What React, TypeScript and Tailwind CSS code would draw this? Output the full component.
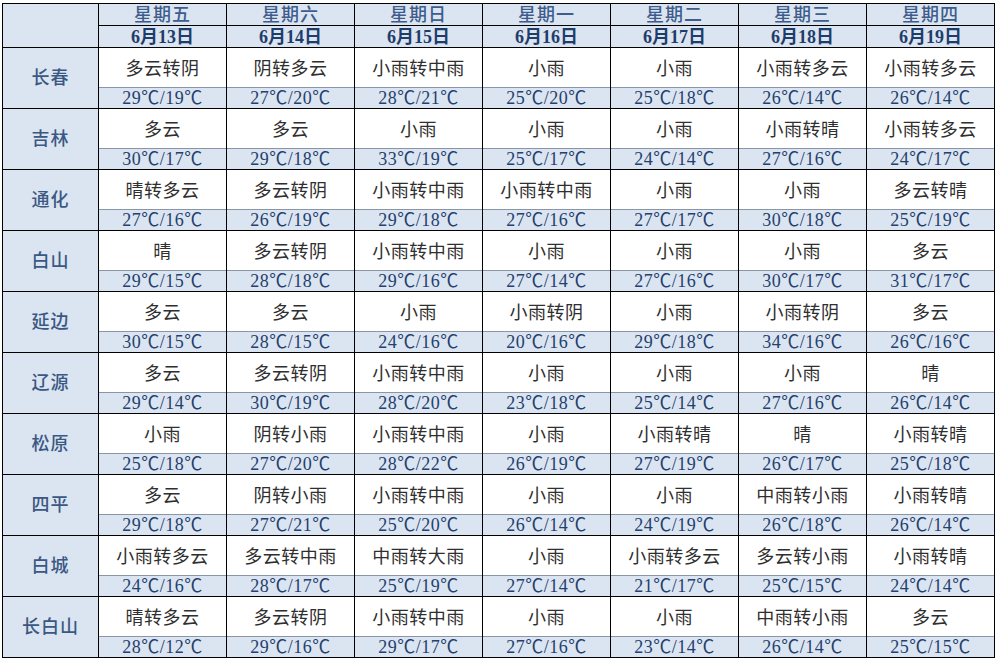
import React from "react";

const days = [
  { week: "星期五", date: "6月13日" },
  { week: "星期六", date: "6月14日" },
  { week: "星期日", date: "6月15日" },
  { week: "星期一", date: "6月16日" },
  { week: "星期二", date: "6月17日" },
  { week: "星期三", date: "6月18日" },
  { week: "星期四", date: "6月19日" },
];

// [weather, high, low]
const rows: { city: string; days: [string, number, number][] }[] = [
  { city: "长春", days: [["多云转阴", 29, 19], ["阴转多云", 27, 20], ["小雨转中雨", 28, 21], ["小雨", 25, 20], ["小雨", 25, 18], ["小雨转多云", 26, 14], ["小雨转多云", 26, 14]] },
  { city: "吉林", days: [["多云", 30, 17], ["多云", 29, 18], ["小雨", 33, 19], ["小雨", 25, 17], ["小雨", 24, 14], ["小雨转晴", 27, 16], ["小雨转多云", 24, 17]] },
  { city: "通化", days: [["晴转多云", 27, 16], ["多云转阴", 26, 19], ["小雨转中雨", 29, 18], ["小雨转中雨", 27, 16], ["小雨", 27, 17], ["小雨", 30, 18], ["多云转晴", 25, 19]] },
  { city: "白山", days: [["晴", 29, 15], ["多云转阴", 28, 18], ["小雨转中雨", 29, 16], ["小雨", 27, 14], ["小雨", 27, 16], ["小雨", 30, 17], ["多云", 31, 17]] },
  { city: "延边", days: [["多云", 30, 15], ["多云", 28, 15], ["小雨", 24, 16], ["小雨转阴", 20, 16], ["小雨", 29, 18], ["小雨转阴", 34, 16], ["多云", 26, 16]] },
  { city: "辽源", days: [["多云", 29, 14], ["多云转阴", 30, 19], ["小雨转中雨", 28, 20], ["小雨", 23, 18], ["小雨", 25, 14], ["小雨", 27, 16], ["晴", 26, 14]] },
  { city: "松原", days: [["小雨", 25, 18], ["阴转小雨", 27, 20], ["小雨转中雨", 28, 22], ["小雨", 26, 19], ["小雨转晴", 27, 19], ["晴", 26, 17], ["小雨转晴", 25, 18]] },
  { city: "四平", days: [["多云", 29, 18], ["阴转小雨", 27, 21], ["小雨转中雨", 25, 20], ["小雨", 26, 14], ["小雨", 24, 19], ["中雨转小雨", 26, 18], ["小雨转晴", 26, 14]] },
  { city: "白城", days: [["小雨转多云", 24, 16], ["多云转中雨", 28, 17], ["中雨转大雨", 25, 19], ["小雨", 27, 14], ["小雨转多云", 21, 17], ["多云转小雨", 25, 15], ["小雨转晴", 24, 14]] },
  { city: "长白山", days: [["晴转多云", 28, 12], ["多云转阴", 29, 16], ["小雨转中雨", 29, 17], ["小雨", 27, 16], ["小雨", 23, 14], ["中雨转小雨", 26, 14], ["多云", 25, 15]] },
];

const font = { fontFamily: '"Liberation Serif", "Noto Sans CJK SC", serif' };

const HeaderRow = () => (
  <div className="flex gap-px">
    <div className="w-[95px] h-[43px] bg-[#dbe5f1]" />
    {days.map((d) => (
      <div key={d.date} className="w-[127px] flex flex-col gap-px">
        <div className="h-[21px] bg-[#dbe5f1] flex items-center justify-center text-[18px] leading-none font-medium text-[#3e5d8c] tracking-[1px]">
          {d.week}
        </div>
        <div className="h-[21px] bg-[#dbe5f1] flex items-center justify-center text-[18px] leading-none font-bold text-[#1f3d6b]">
          {d.date}
        </div>
      </div>
    ))}
  </div>
);

const CityRow = ({ row }: { row: (typeof rows)[number] }) => (
  <div className="flex gap-px h-[60px]">
    <div className="w-[95px] bg-[#dbe5f1] flex items-center justify-center text-[18px] font-medium text-[#3a5883] tracking-[1px]">
      {row.city}
    </div>
    {row.days.map(([w, hi, lo], i) => (
      <div key={i} className="w-[127px] flex flex-col">
        <div className="h-[39px] pt-[3px] bg-white flex items-center justify-center text-[18px] leading-none text-[#2f2f2f] tracking-[0.5px]">
          {w}
        </div>
        <div className="h-[21px] bg-[#dbe5f1] border-t border-[#8a96a6] flex items-center justify-center text-[18px] leading-none text-[#24406d] tracking-[0.5px]">
          {hi}℃/{lo}℃
        </div>
      </div>
    ))}
  </div>
);

export default function App() {
  return (
    <div className="w-[997px] h-[661px] bg-white pl-[2px] pt-[3px]" style={font}>
      <div className="inline-flex flex-col gap-px bg-black p-px">
        <HeaderRow />
        {rows.map((r) => (
          <CityRow key={r.city} row={r} />
        ))}
      </div>
    </div>
  );
}
